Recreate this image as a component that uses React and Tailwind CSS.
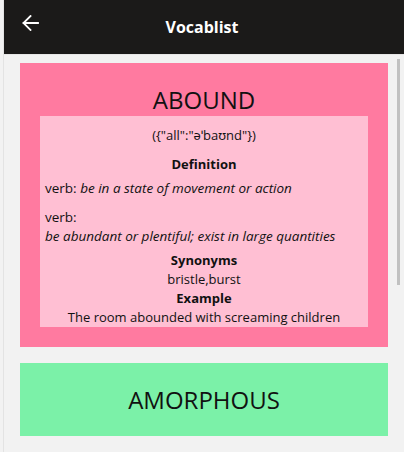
import React from "react";

const words = [
  {
    word: "ABOUND",
    color: "bg-[#ff7aa0]",
    open: true,
    phonetic: '({"all":"əˈbaʊnd"})',
    definitions: [
      { pos: "verb:", text: "be in a state of movement or action", inline: true },
      { pos: "verb:", text: "be abundant or plentiful; exist in large quantities", inline: false },
    ],
    synonyms: "bristle,burst",
    example: "The room abounded with screaming children",
  },
  { word: "AMORPHOUS", color: "bg-[#7bf1a8]", open: false },
];

function BackArrow() {
  return (
    <svg width="17" height="16" viewBox="0 0 17 16" fill="none">
      <path
        d="M16 8H1.5M8.5 1L1.5 8l7 7"
        stroke="white"
        strokeWidth="1.8"
        strokeLinecap="square"
      />
    </svg>
  );
}

function WordCard({ item }) {
  return (
    <div className={`${item.color} px-[20px] py-[20px] mb-[16px]`}>
      <div className="h-[33px] leading-[33px] text-center text-[24px] text-[#111]">
        {item.word}
      </div>
      {item.open && (
        <div className="bg-[#ffbfd3] px-[5px] pt-[10px] text-[13px] leading-[19px] text-[#111]">
          <p className="text-center">{item.phonetic}</p>
          <p className="text-center font-bold mt-[10px]">Definition</p>
          {item.definitions.map((d, i) => (
            <div key={i} className={`text-[13.5px] ${i === 0 ? "mt-[5px]" : "mt-[10px]"}`}>
              {d.inline ? (
                <p>
                  {d.pos} <em>{d.text}</em>
                </p>
              ) : (
                <>
                  <p>{d.pos}</p>
                  <p className="italic">{d.text}</p>
                </>
              )}
            </div>
          ))}
          <p className="text-center font-bold mt-[5px]">Synonyms</p>
          <p className="text-center">{item.synonyms}</p>
          <p className="text-center font-bold">Example</p>
          <p className="text-center">{item.example}</p>
        </div>
      )}
    </div>
  );
}

export default function App() {
  return (
    <div
      className="w-[404px] h-[452px] bg-[#f2f2f2] flex overflow-hidden"
      style={{ fontFamily: '"Open Sans", "Noto Sans", sans-serif' }}
    >
      <div className="w-[3px]" />
      <div className="w-px bg-[#e3e3e3]" />
      <div className="flex-1 flex flex-col">
        <header className="h-[54px] bg-[#1b1a19] flex items-center relative shrink-0">
          <div className="absolute left-[18px] top-[15px]">
            <BackArrow />
          </div>
          <h1 className="flex-1 text-center text-white font-bold text-[16px] pr-[4px]">
            Vocablist
          </h1>
        </header>
        <div className="h-px bg-[#e6e6e6]" />
        <main className="relative flex-1 px-[16px] pt-[8px]">
          {words.map((w) => (
            <WordCard key={w.word} item={w} />
          ))}
          <div className="absolute right-[4px] top-[4px] w-[3px] h-[226px] bg-[#c1c1c1]" />
        </main>
      </div>
    </div>
  );
}
